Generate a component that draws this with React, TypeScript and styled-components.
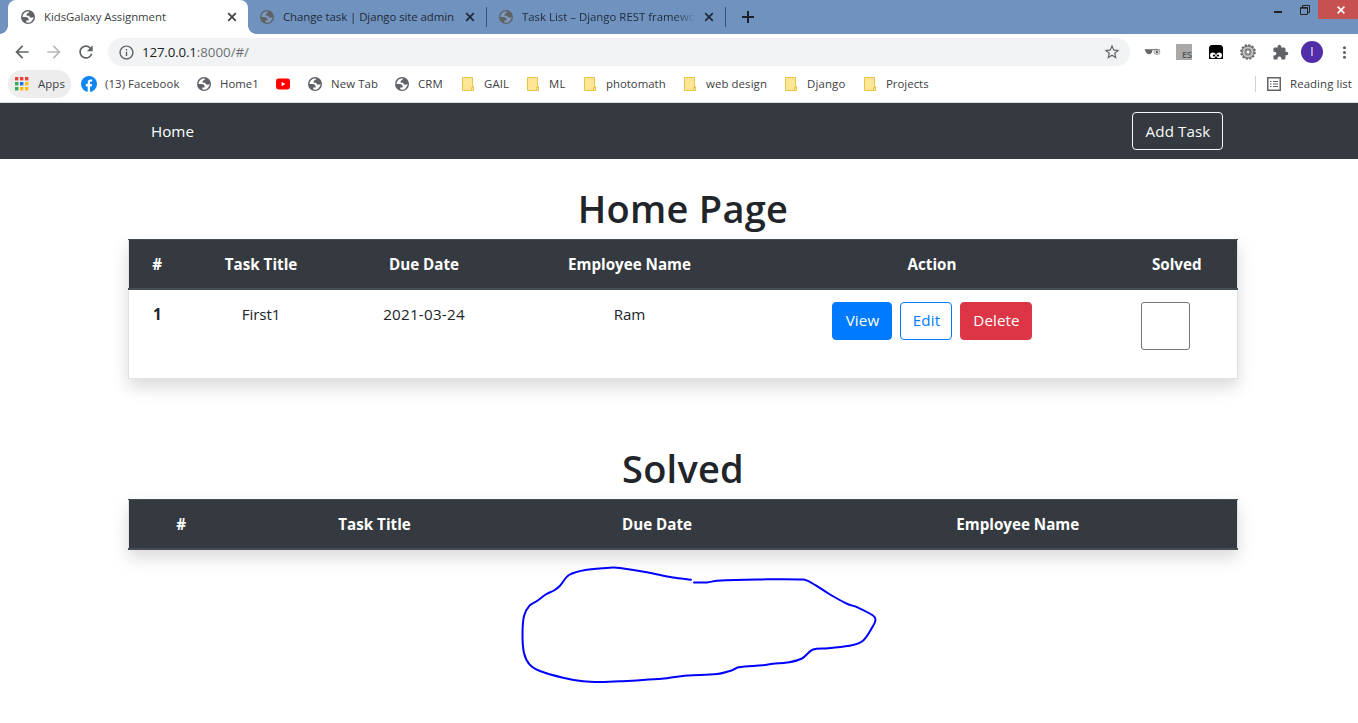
import React from 'react';
import styled, { createGlobalStyle, css } from 'styled-components';
import { MdExtension, MdInfoOutline, MdArrowBack, MdArrowForward, MdRefresh, MdStarBorder, MdMoreVert } from 'react-icons/md';

const GlobalStyle = createGlobalStyle`
  * { box-sizing: border-box; }
  body { margin: 0; background: #fff; color: #212529; font: 15.2px/24px "Open Sans", "Noto Sans", sans-serif; overflow: hidden; }
`;

/* ---------- browser frame ---------- */

const TabStrip = styled.div`
  display: flex;
  height: 34px;
  padding-left: 8px;
  background: #7092be;
`;

const Tab = styled.div<{ $active?: boolean; $width: number }>`
  position: relative;
  display: flex;
  align-items: center;
  flex: none;
  width: ${p => p.$width}px;
  padding: 0 11px 0 ${p => (p.$active ? 13 : 12)}px;
  font-size: 11.4px;
  color: #1f2b3a;
  ${p => p.$active && css`
    background: #fff;
    color: #3c4043;
    border-radius: 8px 8px 0 0;
    &::before, &::after {
      content: '';
      position: absolute;
      bottom: 0;
      width: 8px;
      height: 8px;
    }
    &::before { left: -8px; background: radial-gradient(circle at 0 0, transparent 7.5px, #fff 8px); }
    &::after { right: -8px; background: radial-gradient(circle at 100% 0, transparent 7.5px, #fff 8px); }
  `}
`;

const TabTitle = styled.span<{ $spacing?: number; $fade?: boolean }>`
  flex: 1;
  margin: 0 8px 0 9px;
  overflow: hidden;
  white-space: nowrap;
  letter-spacing: ${p => p.$spacing ?? 0}px;
  ${p => p.$fade && css`mask-image: linear-gradient(to right, #000 88%, transparent);`}
`;

const TabDivider = styled.i`
  align-self: center;
  width: 1px;
  height: 20px;
  background: #3d5270;
`;

const NewTab = styled.div`
  display: flex;
  align-items: center;
  padding-left: 16px;
`;

const WindowControls = styled.div`
  display: flex;
  align-items: flex-start;
  margin-left: auto;
`;

const WindowButton = styled.div<{ $width: number; $close?: boolean }>`
  display: flex;
  justify-content: center;
  align-items: center;
  width: ${p => p.$width}px;
  height: 19px;
  padding-left: ${p => (p.$close ? 6 : 0)}px;
  background: ${p => (p.$close ? '#c75050' : 'transparent')};
`;

const Toolbar = styled.div`
  display: flex;
  align-items: center;
  height: 36px;
  padding-left: 12px;
  color: #5f6368;
`;

const NavIcon = styled.span<{ $dim?: boolean }>`
  display: flex;
  width: 20px;
  margin-right: 12px;
  opacity: ${p => (p.$dim ? 0.45 : 1)};
`;

const AddressBar = styled.div`
  display: flex;
  align-items: center;
  flex: none;
  width: 1022px;
  height: 28px;
  padding: 0 9px 0 9.5px;
  border-radius: 14px;
  background: #f1f3f4;
  font-size: 13.3px;
`;

const Host = styled.span`
  margin-left: 7.5px;
  color: #202124;
  letter-spacing: -0.15px;
`;

const Path = styled.span`
  flex: 1;
  color: #6d7175;
`;

const Extensions = styled.div`
  display: grid;
  grid-template-columns: repeat(7, 32px);
  flex: none;
  place-items: center;
  margin-left: 6px;
`;

const EsBadge = styled.span`
  display: flex;
  justify-content: flex-end;
  align-items: flex-end;
  width: 16px;
  height: 16px;
  background: #a9a9a9;
  color: #555;
  font-size: 9px;
  font-weight: 600;
  line-height: 10px;
`;

const Avatar = styled.span`
  display: grid;
  place-items: center;
  width: 22px;
  height: 22px;
  border-radius: 50%;
  background: #512da8;
  color: #e3dcf2;
  font: 12px "Roboto", sans-serif;
`;

const BookmarkBar = styled.div`
  display: flex;
  align-items: center;
  height: 33px;
  padding: 0 6px 5px 8px;
  border-bottom: 1px solid #d5d8db;
  font-size: 11.4px;
  color: #3c4043;
`;

const Bookmark = styled.div<{ $width: number; $gap?: number; $spacing?: number }>`
  display: flex;
  align-items: center;
  gap: ${p => p.$gap ?? 9}px;
  flex: none;
  width: ${p => p.$width}px;
  white-space: nowrap;
  letter-spacing: ${p => p.$spacing ?? 0.05}px;
`;

const AppsPill = styled(Bookmark)`
  height: 28px;
  margin-right: 10px;
  padding-left: 7px;
  border-radius: 14px;
  background: #ededee;
`;

const ReadingList = styled.div`
  display: flex;
  align-items: center;
  gap: 9px;
  height: 16px;
  margin-left: auto;
  padding-left: 11px;
  border-left: 1px solid #cfd1d4;
  letter-spacing: 0.08px;
`;

/* ---------- web page ---------- */

const Navbar = styled.nav`
  display: flex;
  justify-content: space-between;
  align-items: center;
  height: 56px;
  padding: 0 135px 0 151px;
  background: #343a40;
  color: #fff;
`;

const Button = styled.button<{ $kind: 'light' | 'primary' | 'outline' | 'danger'; $width: number }>`
  width: ${p => p.$width}px;
  height: 38px;
  padding: 0 0 1px 1px;
  border: 1px solid;
  border-radius: 4px;
  font: inherit;
  letter-spacing: 0.08px;
  ${p => ({
    light: css`background: transparent; border-color: #f8f9fa; color: #f8f9fa;`,
    primary: css`background: #007bff; border-color: #007bff; color: #fff;`,
    outline: css`background: #fff; border-color: #007bff; color: #007bff;`,
    danger: css`background: #dc3545; border-color: #dc3545; color: #fff;`,
  })[p.$kind]}
`;

const Container = styled.section`
  width: 1110px;
  margin: 0 120px 0 128px;
`;

const Title = styled.h1`
  margin: 0;
  padding-top: 25px;
  height: 80px;
  font-size: 38px;
  font-weight: 560;
  line-height: 48px;
  letter-spacing: 0.25px;
  text-align: center;
`;

const Table = styled.table`
  width: 1109px;
  table-layout: fixed;
  border-collapse: collapse;
  border: 1px solid #dee2e6;
  box-shadow: 0 8px 16px rgba(0, 0, 0, 0.15);
  text-align: center;
`;

const HeadCell = styled.th<{ $width: number }>`
  width: ${p => p.$width}px;
  height: 49px;
  padding: 1px 0 0 1px;
  border-top: 1px solid #454d55;
  border-bottom: 2px solid #454d55;
  background: #343a40;
  color: #fff;
  font-weight: 700;
`;

const Cell = styled.td<{ $bold?: boolean; $spacing?: number }>`
  height: 90px;
  padding: 12px 0 0 1px;
  vertical-align: top;
  font-weight: ${p => (p.$bold ? 700 : 400)};
  letter-spacing: ${p => p.$spacing ?? 0}px;
`;

const Actions = styled.div`
  display: flex;
  justify-content: center;
  gap: 8px;
`;

const CheckBox = styled.div`
  width: 49px;
  height: 48px;
  margin-left: 24px;
  border: 1px solid #767676;
  border-radius: 3px;
`;

const SolvedContainer = styled(Container)`
  padding-top: 40px;
`;

const Sketch = styled.svg`
  display: block;
  margin: 5px 0 0 500px;
`;

/* ---------- icons ---------- */

const Globe = ({ dim }: { dim?: boolean }) => (
  <svg width="14" height="14" viewBox="2 2 20 20">
    <circle cx="12" cy="12" r="10" fill="#5f6368" />
    <path fill={dim ? '#7f9ac0' : '#fff'} d="M4 12h4.4c3.407.022 4.922 1.73 4.543 5.127H9.488v2.47a8.004 8.004 0 0 0 10.498-8.083C19.327 12.504 18.332 13 17 13c-2.137 0-3.206-.916-3.206-2.75h-3.748c-.274-2.728.683-4.092 2.87-4.092 0-.975.327-1.597.811-1.97A8.004 8.004 0 0 0 4 12z" />
  </svg>
);

const Cross = ({ color = '#1f2b3a' }: { color?: string }) => (
  <svg width="10" height="10" viewBox="0 0 10 10" stroke={color} strokeWidth="1.7">
    <path d="M1.2 1.2l7.6 7.6M8.8 1.2L1.2 8.8" />
  </svg>
);

const Folder = () => (
  <svg width="12" height="14" viewBox="0 0 12 14">
    <path d="M.5.5h10v9h1v4H.5z" fill="#ffe694" stroke="#e8c547" />
    <path d="M9.5 13V10.5h1.5" fill="none" stroke="#e8c547" />
  </svg>
);

const appColors = ['#ea4335', '#ea4335', '#ea4335', '#34a853', '#1a73e8', '#fbbc05', '#34a853', '#fbbc05', '#fbbc05'];

const AppsIcon = () => (
  <svg width="14" height="14" viewBox="0 0 14 14">
    {appColors.map((fill, i) => (
      <rect key={i} x={(i % 3) * 5} y={Math.floor(i / 3) * 5} width="3.4" height="3.4" fill={fill} />
    ))}
  </svg>
);

const Facebook = () => (
  <svg width="16" height="16" viewBox="0 0 16 16">
    <circle cx="8" cy="8" r="8" fill="#1185f2" />
    <path d="M6.7 16v-5.6H4.8V8.1h1.9V6.6c0-2 1.1-3.1 2.9-3.1.6 0 1.2.1 1.6.2v1.9h-1c-.9 0-1.2.5-1.2 1.2v1.3h2.1l-.4 2.3H9V16z" fill="#fff" />
  </svg>
);

const YouTube = () => (
  <svg width="14" height="12" viewBox="0 0 14 12">
    <rect y=".5" width="14" height="11" rx="2.4" fill="#f00" />
    <path d="M5.6 3.9v4.4l3.7-2.2z" fill="#fff" />
  </svg>
);

const Glasses = () => (
  <svg width="17" height="8" viewBox="0 0 17 8">
    <path d="M.5 1.2h8.2l-.7 3Q7.2 6.3 5 6.3T2 4.2z" fill="#666" />
    <path d="M8 1.8Q12 .4 16 2.2" fill="none" stroke="#777" />
    <ellipse cx="12.9" cy="4.2" rx="3" ry="2.2" fill="#eee" stroke="#888" strokeWidth=".8" />
    <circle cx="12.9" cy="4.2" r="1.1" fill="#444" />
  </svg>
);

const Tamper = () => (
  <svg width="14" height="14" viewBox="0 0 14 14">
    <path d="M2 0h10l2 2v12H0V2z" fill="#000" />
    <circle cx="3.9" cy="10.3" r="2.9" fill="#fff" />
    <circle cx="10.1" cy="10.3" r="2.9" fill="#fff" />
    <circle cx="5" cy="10.6" r="1.1" fill="#000" />
    <circle cx="9" cy="10.6" r="1.1" fill="#000" />
  </svg>
);

const Gear = () => (
  <svg width="16" height="16" viewBox="0 0 16 16">
    <circle cx="8" cy="8" r="6.8" fill="none" stroke="#6a6a6a" strokeWidth="2" strokeDasharray="2.3 1.26" />
    <circle cx="8" cy="8" r="4.5" fill="none" stroke="#666" strokeWidth="4" />
    <circle cx="8" cy="8" r="4.5" fill="none" stroke="#c4c4c4" strokeWidth="2.2" />
    <circle cx="8" cy="8" r="2" fill="#fff" stroke="#666" strokeWidth=".9" />
  </svg>
);

const ListIcon = () => (
  <svg width="14" height="14" viewBox="0 0 14 14" fill="none" stroke="#5f6368">
    <rect x=".75" y=".75" width="12.5" height="12.5" strokeWidth="1.5" />
    <path d="M3 4.5h1.5M6 4.5h5M3 7h1.5M6 7h5M3 9.5h1.5M6 9.5h5" strokeWidth="1.2" />
  </svg>
);

/* ---------- hand-drawn outline ---------- */

type Point = [number, number];

const outline: Point[] = [
  [191, 24.7], [173, 22.5], [147, 17.3], [120, 13], [113, 12.5], [87, 14.7], [69, 20], [60, 30.7], [54, 35.5],
  [46.5, 39], [37, 46], [29.5, 50.7], [24, 61], [22.5, 80], [24, 98], [29.5, 109.3], [40, 116], [63, 122.7],
  [83, 126.3], [100, 127], [120, 126.3], [167, 123.2], [187, 120.5], [217, 119], [232, 115.3], [238.5, 112.3],
  [263, 110.3], [273, 108.7], [287, 107.6], [302, 103.5], [312.5, 94.8], [328, 93.3], [353, 90], [363.5, 85.2],
  [371.7, 73.3], [375.5, 65], [372.7, 60.3], [357, 52.2], [347.5, 49], [330, 39.5], [311.5, 27.8], [303, 24.6],
  [257, 24.5], [217, 25.8], [207, 27.4], [194, 27.6],
];

const smoothPath = (points: Point[]) =>
  points.slice(1).reduce((d, p, i) => {
    const before = points[Math.max(i - 1, 0)];
    const from = points[i];
    const after = points[Math.min(i + 2, points.length - 1)];
    const reach = Math.hypot(p[0] - from[0], p[1] - from[1]) / 3;
    const lead = Math.hypot(p[0] - before[0], p[1] - before[1]) || 1;
    const trail = Math.hypot(after[0] - from[0], after[1] - from[1]) || 1;
    const c1 = [from[0] + ((p[0] - before[0]) / lead) * reach, from[1] + ((p[1] - before[1]) / lead) * reach];
    const c2 = [p[0] - ((after[0] - from[0]) / trail) * reach, p[1] - ((after[1] - from[1]) / trail) * reach];
    return `${d}C${c1} ${c2} ${p}`;
  }, `M${points[0]}`);

/* ---------- data ---------- */

const bookmarks: { label: string; icon: React.ReactNode; width: number; gap?: number; spacing?: number }[] = [
  { label: '(13) Facebook', icon: <Facebook />, width: 116, gap: 8, spacing: 0.08 },
  { label: 'Home1', icon: <Globe />, width: 79, spacing: 0 },
  { label: '', icon: <YouTube />, width: 32 },
  { label: 'New Tab', icon: <Globe />, width: 87, spacing: 0.1 },
  { label: 'CRM', icon: <Globe />, width: 67, spacing: 0.15 },
  { label: 'GAIL', icon: <Folder />, width: 65, gap: 10, spacing: 0.1 },
  { label: 'ML', icon: <Folder />, width: 57, gap: 10, spacing: 0.3 },
  { label: 'photomath', icon: <Folder />, width: 100, gap: 10, spacing: 0 },
  { label: 'web design', icon: <Folder />, width: 101, gap: 10, spacing: 0.1 },
  { label: 'Django', icon: <Folder />, width: 79, gap: 10, spacing: 0.15 },
  { label: 'Projects', icon: <Folder />, width: 70, gap: 10, spacing: 0 },
];

const taskColumns: [string, number][] = [
  ['#', 56], ['Task Title', 152], ['Due Date', 174], ['Employee Name', 237], ['Action', 368], ['Solved', 122],
];

const solvedColumns: [string, number][] = [
  ['#', 104], ['Task Title', 283], ['Due Date', 282], ['Employee Name', 440],
];

const HeadRow = ({ columns }: { columns: [string, number][] }) => (
  <thead>
    <tr>{columns.map(([label, width]) => <HeadCell key={label} $width={width}>{label}</HeadCell>)}</tr>
  </thead>
);

export default function App() {
  return (
    <>
      <GlobalStyle />
      <TabStrip>
        <Tab $active $width={240}>
          <Globe /><TabTitle $spacing={-0.04}>KidsGalaxy Assignment</TabTitle><Cross color="#3c4043" />
        </Tab>
        <Tab $width={238}>
          <Globe dim /><TabTitle $spacing={-0.06}>Change task | Django site admin</TabTitle><Cross />
        </Tab>
        <TabDivider />
        <Tab $width={238}>
          <Globe dim /><TabTitle $fade>Task List – Django REST framework</TabTitle><Cross />
        </Tab>
        <TabDivider />
        <NewTab>
          <svg width="12" height="12" viewBox="0 0 12 12" stroke="#1b222c" strokeWidth="2"><path d="M6 0v12M0 6h12" /></svg>
        </NewTab>
        <WindowControls>
          <WindowButton $width={26}>
            <svg width="8" height="8" viewBox="0 0 8 8"><path d="M0 5h8v2H0z" fill="#222" /></svg>
          </WindowButton>
          <WindowButton $width={27}>
            <svg width="10" height="10" viewBox="0 0 10 10" fill="none" stroke="#222"><path d="M.5 2.5h7v7h-7zM.5 3.2h7M2.5 2V.5h7v7H8" /></svg>
          </WindowButton>
          <WindowButton $width={40} $close>
            <svg width="8" height="8" viewBox="0 0 8 8" stroke="#fff" strokeWidth="1.6"><path d="M.6.6l6.8 6.8M7.4.6L.6 7.4" /></svg>
          </WindowButton>
        </WindowControls>
      </TabStrip>

      <Toolbar>
        <NavIcon><MdArrowBack size={20} /></NavIcon>
        <NavIcon $dim><MdArrowForward size={20} /></NavIcon>
        <NavIcon><MdRefresh size={20} /></NavIcon>
        <AddressBar>
          <MdInfoOutline size={17} />
          <Host>127.0.0.1</Host><Path>:8000/#/</Path>
          <MdStarBorder size={18} />
        </AddressBar>
        <Extensions>
          <Glasses />
          <EsBadge>ES</EsBadge>
          <Tamper />
          <Gear />
          <MdExtension size={17} />
          <Avatar>I</Avatar>
          <MdMoreVert size={19} />
        </Extensions>
      </Toolbar>

      <BookmarkBar>
        <AppsPill $width={63} $spacing={0.1}><AppsIcon />Apps</AppsPill>
        {bookmarks.map((b, i) => (
          <Bookmark key={i} $width={b.width} $gap={b.gap} $spacing={b.spacing}>{b.icon}{b.label}</Bookmark>
        ))}
        <ReadingList><ListIcon />Reading list</ReadingList>
      </BookmarkBar>

      <Navbar>
        <span>Home</span>
        <Button $kind="light" $width={91}>Add Task</Button>
      </Navbar>

      <Container>
        <Title>Home Page</Title>
        <Table>
          <HeadRow columns={taskColumns} />
          <tbody>
            <tr>
              <Cell $bold>1</Cell>
              <Cell $spacing={-0.1}>First1</Cell>
              <Cell $spacing={0.25}>2021-03-24</Cell>
              <Cell $spacing={-0.2}>Ram</Cell>
              <Cell>
                <Actions>
                  <Button $kind="primary" $width={60}>View</Button>
                  <Button $kind="outline" $width={52}>Edit</Button>
                  <Button $kind="danger" $width={72}>Delete</Button>
                </Actions>
              </Cell>
              <Cell><CheckBox /></Cell>
            </tr>
          </tbody>
        </Table>
      </Container>

      <SolvedContainer>
        <Title>Solved</Title>
        <Table><HeadRow columns={solvedColumns} /></Table>
      </SolvedContainer>

      <Sketch width="400" height="140" viewBox="0 0 400 140">
        <path d={smoothPath(outline)} fill="none" stroke="#0000ff" strokeWidth="2" strokeLinecap="round" />
      </Sketch>
    </>
  );
}
